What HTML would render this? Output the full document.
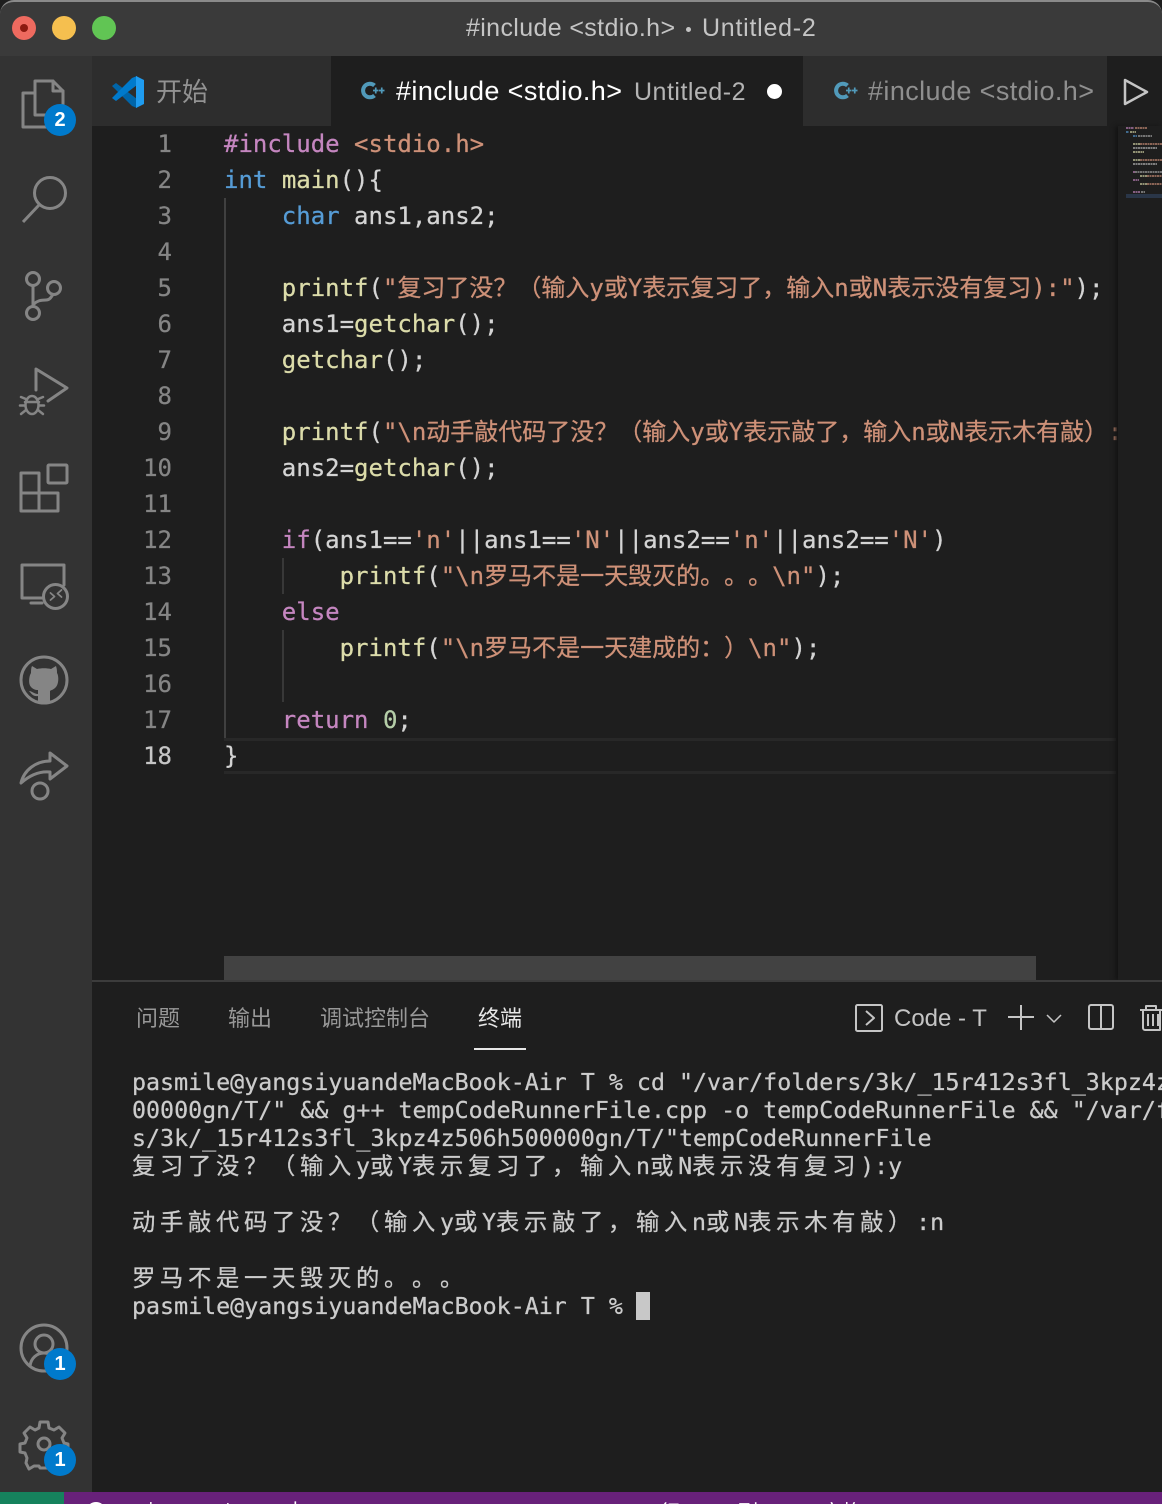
<!DOCTYPE html>
<html lang="zh-CN"><head><meta charset="utf-8"><title>VS Code</title>
<style>
html,body{margin:0;padding:0;width:1162px;height:1504px;overflow:hidden;background:#1e1e1e}
#r{position:relative;width:1162px;height:1504px;overflow:hidden;background:#1e1e1e;text-spacing-trim:space-all}
.a{position:absolute;white-space:pre}
.ui{font-family:"Liberation Sans","Noto Sans CJK SC",sans-serif}
.l{position:absolute;left:224px;height:36px;font:24px/36px "DejaVu Sans Mono","Noto Sans CJK SC",monospace;white-space:pre;color:#d4d4d4;-webkit-text-stroke:.25px currentColor}
.n{position:absolute;left:120px;width:52px;text-align:right;font:24px/36px "DejaVu Sans Mono",monospace;color:#858585;-webkit-text-stroke:.25px currentColor}
.p{color:#c586c0}.b{color:#569cd6}.f{color:#dcdcaa}.s{color:#ce9178}.g{color:#b5cea8}
.t{position:absolute;left:132px;height:28px;font:23.3px/28px "DejaVu Sans Mono","Noto Sans CJK SC",monospace;white-space:pre;color:#cccccc;-webkit-text-stroke:.25px currentColor}
.c{letter-spacing:4.7px}
.badge{position:absolute;width:32px;height:32px;border-radius:16px;background:#007acc;color:#fff;font:bold 20px/32px "Liberation Sans",sans-serif;text-align:center}
svg{position:absolute;overflow:visible}
.tab{position:absolute;font:27px/36px "Liberation Sans",sans-serif;white-space:pre;letter-spacing:.4px}
.guide{position:absolute;width:2px;background:#404040}
</style></head><body><div id="r">

<!-- title bar -->
<div class="a" style="left:0;top:0;width:1162px;height:56px;background:#3a3a3a;border-radius:14px 14px 0 0;border-top:2px solid #8a8a8a;box-sizing:border-box"></div>
<div class="a" style="left:12px;top:16px;width:24px;height:24px;border-radius:50%;background:#ee6a5f"></div>
<div class="a" style="left:20px;top:24px;width:8px;height:8px;border-radius:50%;background:#8c1a10"></div>
<div class="a" style="left:52px;top:16px;width:24px;height:24px;border-radius:50%;background:#f5bf4f"></div>
<div class="a" style="left:92px;top:16px;width:24px;height:24px;border-radius:50%;background:#61c554"></div>
<div class="a ui" style="left:466px;top:12px;font-size:25px;line-height:32px;color:#c4c4c4;letter-spacing:.36px">#include &lt;stdio.h&gt;</div>
<div class="a" style="left:686px;top:27px;width:5px;height:5px;border-radius:50%;background:#c4c4c4"></div>
<div class="a ui" style="left:702px;top:12px;font-size:25px;line-height:32px;color:#c4c4c4;letter-spacing:.75px">Untitled-2</div>

<!-- activity bar -->
<div class="a" style="left:0;top:56px;width:92px;height:1436px;background:#333333"></div>
<svg style="left:0;top:56px" width="92" height="1436" viewBox="0 56 92 1436" fill="none" stroke="#858585" stroke-width="3" stroke-linejoin="round" stroke-linecap="round">
  <!-- files -->
  <path d="M35 81H53L63 91V115H35Z"/><path d="M53 81V91H63"/><path d="M35 93H23V127H50V115"/>
  <!-- search -->
  <circle cx="50" cy="193" r="15.500"/><path d="M40 204L23 222" stroke-linecap="butt"/>
  <!-- git -->
  <circle cx="33" cy="279" r="6.500"/><circle cx="54" cy="288" r="6.500"/><circle cx="33" cy="313" r="6.500"/><path d="M33 285.500V306.500M34 304C37 301 40 300 46 300C50 300 51 297 53 294.500"/>
  <!-- debug -->
  <path d="M36 390V369L67 388L48 401"/>
  <g stroke-width="2.500">
    <ellipse cx="32" cy="405" rx="6.500" ry="9"/><path d="M25 402H39M21 397L27 399.500M43 397L37 399.500M20 405.500H25M39 405.500H44M21 414L26 410M43 414L38 410"/>
  </g>
  <!-- extensions -->
  <path d="M21 473H39V511H21ZM21 493H58V511H39M39 493V473"/><rect x="48" y="465" width="19" height="18" rx="1"/>
  <!-- remote -->
  <path d="M64 585V565H22V598H42M31 603H42"/><circle cx="55.500" cy="596.500" r="12"/>
  <path d="M50.500 593L54.500 596.500L50.500 600M61.500 590L57.500 593.500L61.500 597" stroke-width="1.800"/>
  <!-- github -->
  <circle cx="44" cy="680" r="23"/>
  <path fill="#858585" stroke="none" d="M32 666L37 669C41 668 47 668 51 669L56 666C57 669 57 671 57 673C59 676 59 685 55 688C53 690 51 690 50 691V701C47 702 41 702 38 701V696C33 697 31 693 29 691C32 691 34 694 38 694C38 692 38 691 38 690C35 690 33 689 31 687C28 684 29 676 31 673C31 671 31 668 32 666Z"/>
  <!-- share -->
  <path d="M21 783C24 770 36 761 50 761V753L67 766L50 779V772C40 771 30 775 21 783Z" stroke-width="3"/><circle cx="40" cy="791" r="8"/>
  <!-- account -->
  <circle cx="44" cy="1348" r="23"/><circle cx="44" cy="1344" r="9"/><path d="M30 1366C31 1358 37 1353 44 1353C51 1353 57 1358 58 1366"/>
  <!-- gear -->
  <path d="M40 1422H48L49 1428L54 1430L59 1427L65 1433L62 1438L64 1443L68 1444V1452L63 1453L61 1458L64 1463L58 1469L53 1466L49 1468L48 1468H40L39 1466L34 1466L29 1469L26 1463L27 1458L25 1453L20 1452V1444L25 1443L27 1438L24 1433L30 1427L35 1430L39 1428Z"/>
  <circle cx="44" cy="1444" r="6"/>
</svg>
<div class="badge" style="left:44px;top:104px">2</div>
<div class="badge" style="left:44px;top:1348px">1</div>
<div class="badge" style="left:44px;top:1444px">1</div>

<!-- tabs -->
<div class="a" style="left:92px;top:56px;width:1070px;height:70px;background:#252526"></div>
<div class="a" style="left:92px;top:56px;width:239px;height:70px;background:#2d2d2d"></div>
<div class="a" style="left:331px;top:56px;width:472px;height:70px;background:#1e1e1e"></div>
<div class="a" style="left:803px;top:56px;width:304px;height:70px;background:#2d2d2d"></div>
<div class="a" style="left:1107px;top:56px;width:55px;height:70px;background:#1e1e1e"></div>
<svg style="left:100px;top:70px" width="50" height="44" viewBox="100 70 50 44">
  <path fill="#0065a9" d="M112 86L116 83L137 99V108L132 106Z"/>
  <path fill="#007acc" d="M112 98L116 101L137 85V76L132 78Z"/>
  <path fill="#1f9cf0" d="M136 76L144 80V104L136 108Z"/>
</svg>
<div class="a" style="left:156px;top:73px;color:#929292;font:26px/36px 'Noto Sans CJK SC',sans-serif">开始</div>
<svg style="left:361px;top:78px" width="26" height="26" viewBox="0 0 26 26" fill="none">
  <path d="M13.500 7.500A6.800 6.800 0 1 0 13.500 17.500" stroke="#519aba" stroke-width="4"/>
  <path d="M12 12.500h5.500M14.750 9.500v6M18 12.500h5.500M20.750 9.500v6" stroke="#519aba" stroke-width="1.700"/>
</svg>
<div class="tab" style="left:396px;top:73px;color:#ffffff">#include &lt;stdio.h&gt;</div>
<div class="a ui" style="left:634px;top:74px;font-size:25px;line-height:36px;color:#b4b4b4;letter-spacing:.5px">Untitled-2</div>
<div class="a" style="left:767px;top:84px;width:15px;height:15px;border-radius:50%;background:#fff"></div>
<svg style="left:834px;top:78px" width="26" height="26" viewBox="0 0 26 26" fill="none">
  <path d="M13.500 7.500A6.800 6.800 0 1 0 13.500 17.500" stroke="#519aba" stroke-width="4"/>
  <path d="M12 12.500h5.500M14.750 9.500v6M18 12.500h5.500M20.750 9.500v6" stroke="#519aba" stroke-width="1.700"/>
</svg>
<div class="tab" style="left:868px;top:73px;color:#8f8f8f">#include &lt;stdio.h&gt;</div>
<svg style="left:1120px;top:76px" width="30" height="32" viewBox="1120 76 30 32" fill="none" stroke="#c5c5c5" stroke-width="2.500" stroke-linejoin="round"><path d="M1125 80L1147 92L1125 104Z"/></svg>

<!-- current-line highlight -->
<div class="a" style="left:224px;top:738px;width:892px;height:36px;box-sizing:border-box;border-top:3px solid #282828;border-bottom:3px solid #282828"></div>

<!-- guides -->
<div class="guide" style="left:224px;top:198px;height:540px"></div>
<div class="guide" style="left:282px;top:558px;height:36px;background:#383838"></div>
<div class="guide" style="left:282px;top:630px;height:72px;background:#383838"></div>

<!-- line numbers -->
<div class="n" style="top:126px">1</div><div class="n" style="top:162px">2</div><div class="n" style="top:198px">3</div><div class="n" style="top:234px">4</div><div class="n" style="top:270px">5</div><div class="n" style="top:306px">6</div><div class="n" style="top:342px">7</div><div class="n" style="top:378px">8</div><div class="n" style="top:414px">9</div><div class="n" style="top:450px">10</div><div class="n" style="top:486px">11</div><div class="n" style="top:522px">12</div><div class="n" style="top:558px">13</div><div class="n" style="top:594px">14</div><div class="n" style="top:630px">15</div><div class="n" style="top:666px">16</div><div class="n" style="top:702px">17</div><div class="n" style="top:738px;color:#c6c6c6">18</div>

<!-- code -->
<div id="code" style="position:absolute;left:0;top:0;width:1118px;height:960px;overflow:hidden">
<div class="l" style="top:126px"><span class="p">#include</span> <span class="s">&lt;stdio.h&gt;</span></div>
<div class="l" style="top:162px"><span class="b">int</span> <span class="f">main</span>(){</div>
<div class="l" style="top:198px">    <span class="b">char</span> ans1,ans2;</div>
<div class="l" style="top:270px">    <span class="f">printf</span>(<span class="s">"复习了没？（输入y或Y表示复习了，输入n或N表示没有复习):"</span>);</div>
<div class="l" style="top:306px">    ans1=<span class="f">getchar</span>();</div>
<div class="l" style="top:342px">    <span class="f">getchar</span>();</div>
<div class="l" style="top:414px">    <span class="f">printf</span>(<span class="s">"\n动手敲代码了没？（输入y或Y表示敲了，输入n或N表示木有敲）:n"</span>);</div>
<div class="l" style="top:450px">    ans2=<span class="f">getchar</span>();</div>
<div class="l" style="top:522px">    <span class="p">if</span>(ans1==<span class="s">'n'</span>||ans1==<span class="s">'N'</span>||ans2==<span class="s">'n'</span>||ans2==<span class="s">'N'</span>)</div>
<div class="l" style="top:558px">        <span class="f">printf</span>(<span class="s">"\n罗马不是一天毁灭的。。。\n"</span>);</div>
<div class="l" style="top:594px">    <span class="p">else</span></div>
<div class="l" style="top:630px">        <span class="f">printf</span>(<span class="s">"\n罗马不是一天建成的：）\n"</span>);</div>
<div class="l" style="top:702px">    <span class="p">return</span> <span class="g">0</span>;</div>
<div class="l" style="top:738px">}</div>
</div>

<!-- minimap -->
<div class="a" style="left:1118px;top:126px;width:44px;height:854px;background:#1e1e1e;box-shadow:-3px 0 4px #141414"></div>
<svg style="left:1124px;top:126px" width="38" height="76" viewBox="0 0 38 76">
  <g fill="none" stroke-width="1.800" opacity=".7" stroke-dasharray="2 .5">
    <path d="M2 2h8" stroke="#c586c0"/><path d="M11 2h12" stroke="#ce9178"/>
    <path d="M2 6h3" stroke="#569cd6"/><path d="M6 6h6" stroke="#dcdcaa"/>
    <path d="M9 10h4" stroke="#569cd6"/><path d="M14 10h14" stroke="#aaa"/>
    <path d="M9 18h7" stroke="#dcdcaa"/><path d="M16 18h22" stroke="#ce9178"/>
    <path d="M9 22h24" stroke="#bbb"/><path d="M9 26h11" stroke="#dcdcaa"/>
    <path d="M9 34h7" stroke="#dcdcaa"/><path d="M16 34h22" stroke="#ce9178"/>
    <path d="M9 38h24" stroke="#bbb"/>
    <path d="M9 46h2" stroke="#c586c0"/><path d="M11 46h27" stroke="#aaa"/>
    <path d="M16 50h7" stroke="#dcdcaa"/><path d="M23 50h15" stroke="#ce9178"/>
    <path d="M9 54h6" stroke="#c586c0"/>
    <path d="M16 58h7" stroke="#dcdcaa"/><path d="M23 58h15" stroke="#ce9178"/>
    <path d="M9 66h7" stroke="#c586c0"/><path d="M17 66h4" stroke="#aaa"/>
  </g>
  <rect x="2" y="68" width="36" height="4" fill="#2a3648"/>
</svg>

<!-- scrollbar -->
<div class="a" style="left:224px;top:956px;width:812px;height:24px;background:#424242"></div>

<!-- panel -->
<div class="a" style="left:92px;top:980px;width:1070px;height:512px;background:#1e1e1e;border-top:2px solid #3c3c3c;box-sizing:border-box"></div>
<div class="a" style="left:136px;top:1001px;font:22px/32px 'Noto Sans CJK SC',sans-serif;color:#989898">问题</div>
<div class="a" style="left:228px;top:1001px;font:22px/32px 'Noto Sans CJK SC',sans-serif;color:#989898">输出</div>
<div class="a" style="left:320px;top:1001px;font:22px/32px 'Noto Sans CJK SC',sans-serif;color:#989898">调试控制台</div>
<div class="a" style="left:478px;top:1001px;font:22px/32px 'Noto Sans CJK SC',sans-serif;color:#e7e7e7">终端</div>
<div class="a" style="left:474px;top:1048px;width:52px;height:2px;background:#e7e7e7"></div>
<svg style="left:850px;top:1000px" width="312" height="36" viewBox="850 1000 312 36" fill="none" stroke="#c5c5c5" stroke-width="2" stroke-linejoin="round">
  <rect x="856" y="1005" width="26" height="26" rx="1.500"/><path d="M866 1011L874 1018L866 1025"/>
  <path d="M1021 1005V1030M1008 1017H1034"/>
  <path d="M1047 1015L1054 1022L1061 1015" stroke-width="1.500"/>
  <rect x="1089" y="1005" width="24" height="24" rx="2"/><path d="M1101 1005V1029"/>
  <path d="M1140 1010H1164M1146 1010V1006H1156V1010M1143 1010V1028C1143 1029 1144 1030 1145 1030H1160V1010M1148 1014V1026M1153 1014V1026M1158 1014V1026"/>
</svg>
<div class="a ui" style="left:894px;top:1003px;font-size:24px;line-height:32px;color:#c5c5c5">Code - T</div>

<!-- terminal -->
<div class="t" style="top:1069px">pasmile@yangsiyuandeMacBook-Air T % cd "/var/folders/3k/_15r412s3fl_3kpz4z506h5</div>
<div class="t" style="top:1097px">00000gn/T/" &amp;&amp; g++ tempCodeRunnerFile.cpp -o tempCodeRunnerFile &amp;&amp; "/var/folders</div>
<div class="t" style="top:1125px">s/3k/_15r412s3fl_3kpz4z506h500000gn/T/"tempCodeRunnerFile</div>
<div class="t" style="top:1153px"><span class="c">复习了没？（输入</span>y<span class="c">或</span>Y<span class="c">表示复习了，输入</span>n<span class="c">或</span>N<span class="c">表示没有复习</span>):y</div>
<div class="t" style="top:1209px"><span class="c">动手敲代码了没？（输入</span>y<span class="c">或</span>Y<span class="c">表示敲了，输入</span>n<span class="c">或</span>N<span class="c">表示木有敲）</span>:n</div>
<div class="t" style="top:1265px"><span class="c">罗马不是一天毁灭的。。。</span></div>
<div class="t" style="top:1293px">pasmile@yangsiyuandeMacBook-Air T %</div>
<div class="a" style="left:636px;top:1292px;width:14px;height:28px;background:#c8c8c8"></div>

<!-- status bar -->
<div class="a" style="left:0;top:1492px;width:1162px;height:12px;background:#68217a;overflow:hidden"></div>
<div class="a" style="left:0;top:1492px;width:64px;height:12px;background:#16825d"></div>
<div class="a" style="left:0;top:1492px;width:1162px;height:12px;overflow:hidden">
  <div class="a" style="left:34px;top:9px;font:24px/28px 'Liberation Sans',sans-serif;color:#fff">ᐸ</div>
  <div class="a" style="left:86px;top:10px;width:14px;height:14px;border:3px solid #fff;border-radius:50%"></div>
  <div class="a" style="left:145px;top:4px;font:20px/24px 'Liberation Sans',sans-serif;color:#fff">+</div>
  <div class="a" style="left:222px;top:5px;font:20px/24px 'Liberation Sans',sans-serif;color:#fff">+</div>
  <div class="a" style="left:286px;top:6px;font:20px/24px 'Noto Sans CJK SC',sans-serif;color:#fff">上</div>
  <div class="a" style="left:660px;top:7px;font:20px/24px 'Noto Sans CJK SC',sans-serif;color:#fff">行</div>
  <div class="a" style="left:738px;top:7px;font:20px/24px 'Noto Sans CJK SC',sans-serif;color:#fff">列</div>
  <div class="a" style="left:822px;top:7px;font:20px/24px 'Noto Sans CJK SC',sans-serif;color:#fff">空格</div>
</div>
</div></body></html>
